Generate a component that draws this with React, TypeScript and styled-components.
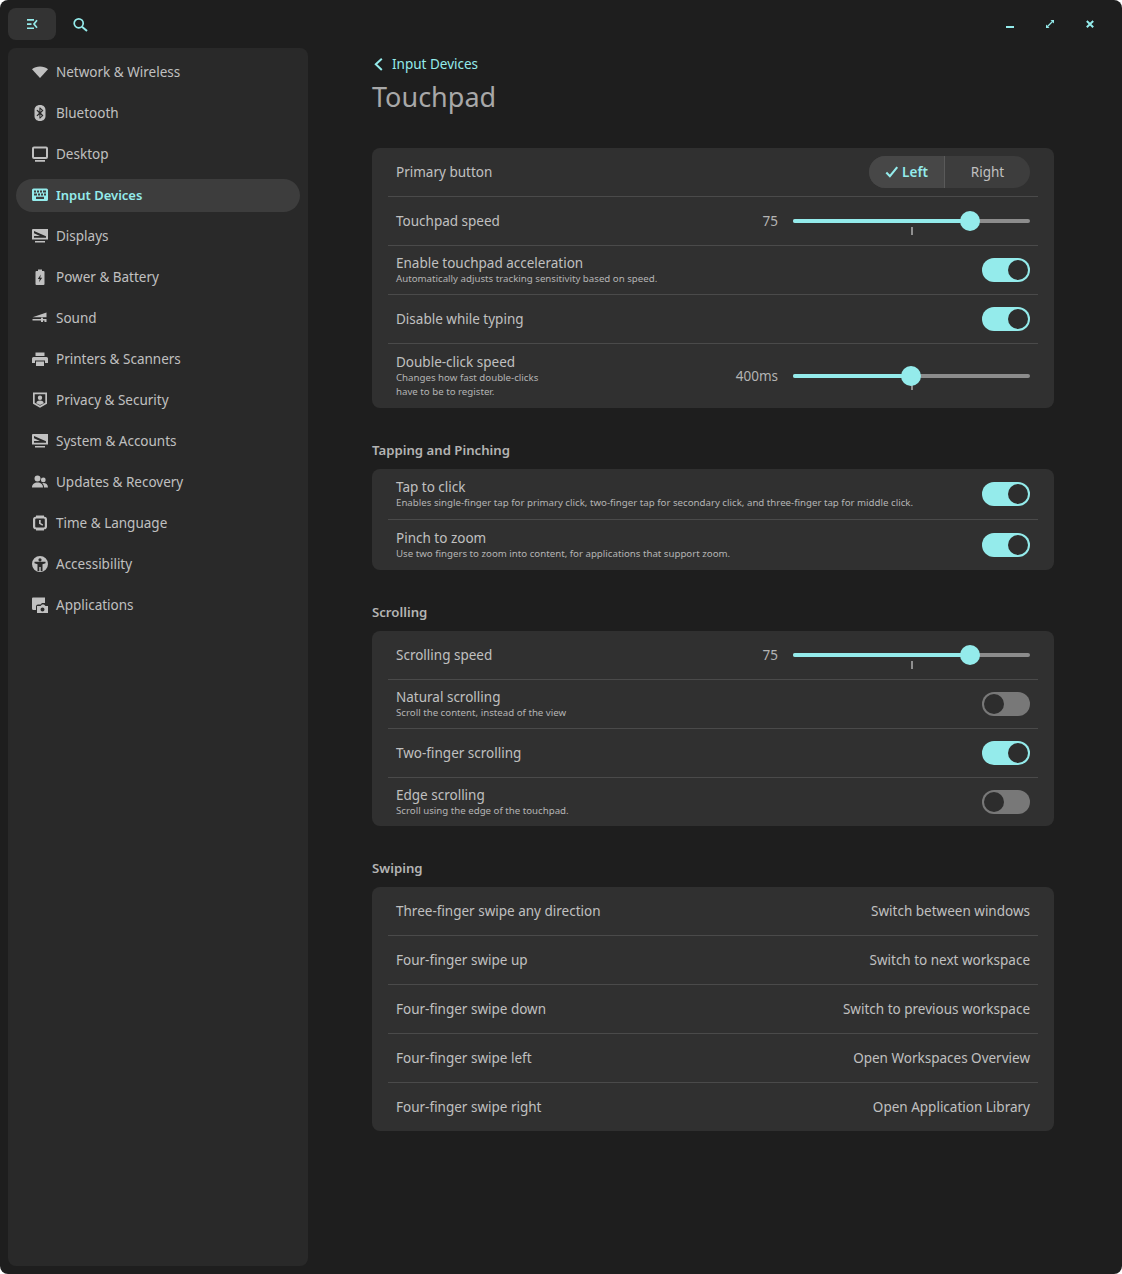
import { ReactNode } from "react";
import styled, { createGlobalStyle } from "styled-components";

const ACCENT = "#94ebeb";
const FONT = `"Noto Sans", "Open Sans", sans-serif`;

const GlobalStyle = createGlobalStyle`
  html, body {
    margin: 0;
    padding: 0;
    background: #ffffff;
  }
  * {
    box-sizing: border-box;
  }
`;

const Window = styled.div`
  width: 1122px;
  height: 1274px;
  background: #1e1e1e;
  border-radius: 8px;
  font-family: ${FONT};
  font-size: 13.5px;
  line-height: 18px;
  color: #c0c0c0;
  display: grid;
  grid-template-columns: 308px 1fr;
  grid-template-rows: 48px 1fr;
  overflow: hidden;
`;

const Header = styled.header`
  grid-column: 1 / 3;
  display: flex;
  align-items: center;
  padding: 0 12px 0 8px;
`;

const HeaderButton = styled.button<{ $active?: boolean }>`
  width: 48px;
  height: 32px;
  border: 0;
  padding: 0;
  border-radius: 8px;
  background: ${(p) => (p.$active ? "#333333" : "transparent")};
  color: ${ACCENT};
  display: flex;
  align-items: center;
  justify-content: center;
`;

const HeaderSpacer = styled.div`
  flex: 1;
`;

const WindowButton = styled.button`
  width: 40px;
  height: 32px;
  border: 0;
  padding: 0;
  background: transparent;
  color: ${ACCENT};
  display: flex;
  align-items: center;
  justify-content: center;
`;

const Sidebar = styled.nav`
  margin: 0 0 8px 8px;
  background: #292929;
  border-radius: 8px;
  padding: 8px;
  display: flex;
  flex-direction: column;
  gap: 8px;
`;

const NavItem = styled.a<{ $active?: boolean }>`
  height: 33px;
  border-radius: 17px;
  padding: 0 16px 1px;
  display: flex;
  align-items: center;
  gap: 8px;
  background: ${(p) => (p.$active ? "#3d3d3d" : "transparent")};
  color: ${(p) => (p.$active ? ACCENT : "#c0c0c0")};
  font-weight: ${(p) => (p.$active ? 600 : 400)};
  font-size: ${(p) => (p.$active ? "13px" : "13.5px")};
`;

const Main = styled.main`
  padding: 8px 68px 0 64px;
`;

const Breadcrumb = styled.div`
  height: 16px;
  display: flex;
  align-items: center;
  gap: 4px;
  color: ${ACCENT};
`;

const Title = styled.h1`
  margin: 7px 0 0;
  height: 36px;
  line-height: 36px;
  font-size: 27px;
  font-weight: 400;
  color: #a8a8a8;
`;

const Sections = styled.div`
  margin-top: 33px;
  display: flex;
  flex-direction: column;
  gap: 32px;
`;

const Section = styled.section`
  display: flex;
  flex-direction: column;
  gap: 8px;
`;

const SectionTitle = styled.h2`
  margin: 0;
  height: 21px;
  line-height: 21px;
  font-size: 13.2px;
  font-weight: 600;
  color: #b4b4b4;
`;

const Card = styled.div`
  background: #303030;
  border-radius: 8px;
  padding: 0 16px;
`;

const Row = styled.div<{ $height?: number }>`
  height: ${(p) => p.$height ?? 48}px;
  padding: 0 8px;
  display: flex;
  align-items: center;
  justify-content: space-between;
  & + & {
    box-sizing: content-box;
    border-top: 1px solid #4a4a4a;
  }
`;

const RowText = styled.div`
  display: flex;
  flex-direction: column;
`;

const RowTitle = styled.span`
  line-height: 18px;
`;

const RowHint = styled.span`
  font-size: 9.7px;
  line-height: 14px;
  white-space: pre-line;
  color: #b4b4b4;
`;

const Segmented = styled.div`
  width: 161px;
  height: 32px;
  border-radius: 16px;
  overflow: hidden;
  background: #3d3d3d;
  display: grid;
  grid-template-columns: 76px 1fr;
`;

const Segment = styled.div<{ $active?: boolean }>`
  display: flex;
  align-items: center;
  justify-content: center;
  gap: 3px;
  background: ${(p) => (p.$active ? "#474747" : "transparent")};
  color: ${(p) => (p.$active ? ACCENT : "#c0c0c0")};
  font-weight: ${(p) => (p.$active ? 600 : 400)};
  border-right: ${(p) => (p.$active ? "1px solid #5a5a5a" : "0")};
`;

const SliderGroup = styled.div`
  display: flex;
  align-items: center;
  gap: 15px;
`;

const SliderValue = styled.span`
  color: #b4b4b4;
`;

const Slider = styled.div`
  position: relative;
  width: 237px;
  height: 4px;
  border-radius: 2px;
  background: #8c8c8c;
`;

const SliderFill = styled.div<{ $value: number }>`
  width: ${(p) => p.$value}%;
  height: 100%;
  border-radius: 2px;
  background: ${ACCENT};
`;

const SliderThumb = styled.div<{ $value: number }>`
  position: absolute;
  top: -8px;
  left: ${(p) => p.$value}%;
  width: 20px;
  height: 20px;
  margin-left: -10.5px;
  border-radius: 50%;
  background: ${ACCENT};
`;

const SliderTick = styled.div`
  position: absolute;
  top: 8px;
  left: 50%;
  width: 2px;
  height: 8px;
  margin-left: -1px;
  background: #8f8f8f;
`;

const Toggle = styled.div<{ $on?: boolean }>`
  width: 48px;
  height: 24px;
  border-radius: 12px;
  padding: 2px;
  display: flex;
  justify-content: ${(p) => (p.$on ? "flex-end" : "flex-start")};
  background: ${(p) => (p.$on ? ACCENT : "#787878")};
`;

const ToggleKnob = styled.div`
  width: 20px;
  height: 20px;
  border-radius: 50%;
  background: #2d2d2d;
`;

const Icon = ({ children, size = 16 }: { children: ReactNode; size?: number }) => (
  <svg width={size} height={size} viewBox="0 0 16 16" fill="currentColor" fillRule="evenodd">
    {children}
  </svg>
);

const monitorPath =
  "M1 1h15v10.500H0V2a1 1 0 0 1 1-1zm1 1.500v7.200h12V8.300L2 3zm0 2.800V8h6zM3 13h10v1.500H3z";

const navItems: { label: string; icon: ReactNode; active?: boolean }[] = [
  { label: "Network & Wireless", icon: <path d="M0 5.200C2 3.400 5 2.500 8 2.500s6 .9 8 2.700l-8 8.800z" /> },
  {
    label: "Bluetooth",
    icon: (
      <path d="M8 0c3.600 0 5.500 2.200 5.500 5v6c0 2.800-1.900 5-5.500 5s-5.500-2.200-5.500-5V5c0-2.800 1.900-5 5.500-5zM7.400 2.400v4.200L5.300 4.700l-.8.800L7 8l-2.500 2.500.8.800 2.100-1.900v4.200h.8l3.200-3L9 8l2.400-2.600-3.200-3zm1 1.900 1.500 1.200-1.500 1.300zm0 5.100 1.500 1.300-1.500 1.200z" />
    ),
  },
  {
    label: "Desktop",
    icon: <path d="M2 .5h12a2 2 0 0 1 2 2V11a2 2 0 0 1-2 2H2a2 2 0 0 1-2-2V2.500a2 2 0 0 1 2-2zm0 2V11h12V2.500zM3 14h10v1.700H3z" />,
  },
  {
    label: "Input Devices",
    active: true,
    icon: (
      <path d="M1.500 1.500h13A1.500 1.500 0 0 1 16 3v9.500a1.500 1.500 0 0 1-1.500 1.500h-13A1.500 1.500 0 0 1 0 12.500V3a1.500 1.500 0 0 1 1.500-1.500zM2 3.500v2h2v-2zm3 0v2h2v-2zm3 0v2h2v-2zm3 0v2h3v-2zM2 6.500v2h3v-2zm4 0v2h2v-2zm3 0v2h2v-2zm3 0v2h2v-2zM4 9.700v2.300h8V9.700z" />
    ),
  },
  { label: "Displays", icon: <path d={monitorPath} /> },
  {
    label: "Power & Battery",
    icon: (
      <path d="M6 .5h4V2h1.500a1 1 0 0 1 1 1v12a1 1 0 0 1-1 1h-7a1 1 0 0 1-1-1V3a1 1 0 0 1 1-1H6zM8.800 5.500 5.800 10h1.900L7 13.300l3.200-4.600H8.200z" />
    ),
  },
  {
    label: "Sound",
    icon: <path d="M14.500 2.500V7.300H.5zM.5 9h8.500V7.800h2V9h3.500v1.500H11V12H9v-1.500H.5zM12.500 10.500h2V12h-2z" />,
  },
  {
    label: "Printers & Scanners",
    icon: (
      <path d="M3.500 1.500h9V5h-9zM1.500 6h13A1.500 1.500 0 0 1 16 7.500V12h-3V9.500H3V12H0V7.500A1.500 1.500 0 0 1 1.500 6zM4 10.500h8V15H4z" />
    ),
  },
  {
    label: "Privacy & Security",
    icon: (
      <path d="M1 .5h14v11.200L8 15.800l-7-4.100zM2.700 2.200v8.500L8 13.800l5.300-3.100V2.200zM8 3.500a2.200 2.200 0 1 1 0 4.400 2.200 2.200 0 0 1 0-4.400zM4.300 11.200C4.300 9.300 5.800 8.500 8 8.500s3.700.8 3.700 2.700L8 13.100z" />
    ),
  },
  { label: "System & Accounts", icon: <path d={monitorPath} /> },
  {
    label: "Updates & Recovery",
    icon: (
      <path d="M5.500 1.500a3 3 0 1 1 0 6 3 3 0 0 1 0-6zM11.300 3.500a2.400 2.400 0 1 1 0 4.800 2.400 2.400 0 0 1 0-4.800zM0 13.500c0-3.500 2.500-5 5.500-5s5.500 1.500 5.500 5zM12 13.500c0-1.800-.6-3.300-1.800-4.400 3.200-.4 5.800 1 5.800 4.400z" />
    ),
  },
  {
    label: "Time & Language",
    icon: (
      <path d="M4 .5h8v1.200A2.500 2.500 0 0 1 15 4.200v7.600a2.500 2.500 0 0 1-3 2.500V15.500H4v-1.200A2.500 2.500 0 0 1 1 11.800V4.200A2.500 2.500 0 0 1 4 1.700zM4.200 3.500a1 1 0 0 0-1 1v7a1 1 0 0 0 1 1h7.600a1 1 0 0 0 1-1v-7a1 1 0 0 0-1-1zM7 5h1.700v3l2.500 1.500-.8 1.300L7 8.800z" />
    ),
  },
  {
    label: "Accessibility",
    icon: (
      <path d="M8 0a8 8 0 1 1 0 16A8 8 0 0 1 8 0zm0 2.200a1.600 1.600 0 1 0 0 3.200 1.600 1.600 0 0 0 0-3.200zM2.500 5.800v1.500l3 1V15h1.800v-4h1.400v4h1.800V8.300l3-1V5.800z" />
    ),
  },
  {
    label: "Applications",
    icon: (
      <path d="M1 .5h12V6h-3L8.500 7.500H6A2 2 0 0 0 4 9.500V13H1.500A1.500 1.500 0 0 1 0 11.500V1.500a1 1 0 0 1 1-1zm4 8.500h3.500L10 7.500h2L13.500 9H16v7H5zm5.500 1.500a2 2 0 1 0 0 4 2 2 0 0 0 0-4z" />
    ),
  },
];

function TextBlock({ title, hint }: { title: string; hint?: string }) {
  return (
    <RowText>
      <RowTitle>{title}</RowTitle>
      {hint && <RowHint>{hint}</RowHint>}
    </RowText>
  );
}

function SpeedSlider({ value, label }: { value: number; label: string }) {
  return (
    <SliderGroup>
      <SliderValue>{label}</SliderValue>
      <Slider>
        <SliderFill $value={value} />
        <SliderTick />
        <SliderThumb $value={value} />
      </Slider>
    </SliderGroup>
  );
}

function Switch({ on }: { on?: boolean }) {
  return (
    <Toggle $on={on}>
      <ToggleKnob />
    </Toggle>
  );
}

const swipes = [
  ["Three-finger swipe any direction", "Switch between windows"],
  ["Four-finger swipe up", "Switch to next workspace"],
  ["Four-finger swipe down", "Switch to previous workspace"],
  ["Four-finger swipe left", "Open Workspaces Overview"],
  ["Four-finger swipe right", "Open Application Library"],
];

export default function App() {
  return (
    <Window>
      <GlobalStyle />
      <Header>
        <HeaderButton $active>
          <Icon>
            <path d="M3 3h7v1.700H3zM3 7.200h4.500v1.700H3zM3 11.400h7v1.700H3z" />
            <path d="M13 4.200 10 8l3 3.800" fill="none" stroke="currentColor" strokeWidth="1.700" />
          </Icon>
        </HeaderButton>
        <HeaderButton>
          <Icon>
            <circle cx="6.700" cy="7.300" r="4.500" fill="none" stroke="currentColor" strokeWidth="1.700" />
            <path d="M10 10.800 15 15" fill="none" stroke="currentColor" strokeWidth="2" />
          </Icon>
        </HeaderButton>
        <HeaderSpacer />
        <WindowButton>
          <Icon>
            <path d="M4 10h8v2H4z" />
          </Icon>
        </WindowButton>
        <WindowButton>
          <Icon>
            <path d="M8.500 4H12v3.500zM4 8.500 7.500 12H4z" />
            <path d="M5.500 10.500 10.500 5.500" fill="none" stroke="currentColor" strokeWidth="1.300" />
          </Icon>
        </WindowButton>
        <WindowButton>
          <Icon>
            <path d="M4.800 5 11.200 11.200M11.200 5 4.800 11.200" fill="none" stroke="currentColor" strokeWidth="2" />
          </Icon>
        </WindowButton>
      </Header>

      <Sidebar>
        {navItems.map((item) => (
          <NavItem key={item.label} $active={item.active}>
            <Icon>{item.icon}</Icon>
            {item.label}
          </NavItem>
        ))}
      </Sidebar>

      <Main>
        <Breadcrumb>
          <Icon>
            <path d="M9.800 2.700 3.800 8.300 9.800 14" fill="none" stroke="currentColor" strokeWidth="2" />
          </Icon>
          Input Devices
        </Breadcrumb>
        <Title>Touchpad</Title>

        <Sections>
          <Section>
            <Card>
              <Row>
                <TextBlock title="Primary button" />
                <Segmented>
                  <Segment $active>
                    <Icon size={14}>
                      <path d="M1.500 8.500 5.600 12.800 14 2.500" fill="none" stroke="currentColor" strokeWidth="2.400" />
                    </Icon>
                    Left
                  </Segment>
                  <Segment>Right</Segment>
                </Segmented>
              </Row>
              <Row>
                <TextBlock title="Touchpad speed" />
                <SpeedSlider value={75} label="75" />
              </Row>
              <Row>
                <TextBlock
                  title="Enable touchpad acceleration"
                  hint="Automatically adjusts tracking sensitivity based on speed."
                />
                <Switch on />
              </Row>
              <Row>
                <TextBlock title="Disable while typing" />
                <Switch on />
              </Row>
              <Row $height={64}>
                <TextBlock
                  title="Double-click speed"
                  hint={"Changes how fast double-clicks\nhave to be to register."}
                />
                <SpeedSlider value={50} label="400ms" />
              </Row>
            </Card>
          </Section>

          <Section>
            <SectionTitle>Tapping and Pinching</SectionTitle>
            <Card>
              <Row $height={50}>
                <TextBlock
                  title="Tap to click"
                  hint="Enables single-finger tap for primary click, two-finger tap for secondary click, and three-finger tap for middle click."
                />
                <Switch on />
              </Row>
              <Row $height={50}>
                <TextBlock
                  title="Pinch to zoom"
                  hint="Use two fingers to zoom into content, for applications that support zoom."
                />
                <Switch on />
              </Row>
            </Card>
          </Section>

          <Section>
            <SectionTitle>Scrolling</SectionTitle>
            <Card>
              <Row>
                <TextBlock title="Scrolling speed" />
                <SpeedSlider value={75} label="75" />
              </Row>
              <Row>
                <TextBlock title="Natural scrolling" hint="Scroll the content, instead of the view" />
                <Switch />
              </Row>
              <Row>
                <TextBlock title="Two-finger scrolling" />
                <Switch on />
              </Row>
              <Row>
                <TextBlock title="Edge scrolling" hint="Scroll using the edge of the touchpad." />
                <Switch />
              </Row>
            </Card>
          </Section>

          <Section>
            <SectionTitle>Swiping</SectionTitle>
            <Card>
              {swipes.map(([gesture, action]) => (
                <Row key={gesture}>
                  <TextBlock title={gesture} />
                  <span>{action}</span>
                </Row>
              ))}
            </Card>
          </Section>
        </Sections>
      </Main>
    </Window>
  );
}
